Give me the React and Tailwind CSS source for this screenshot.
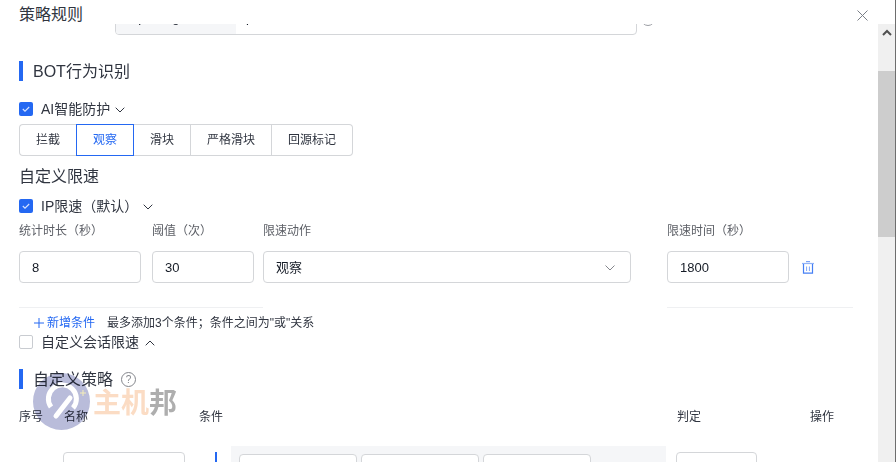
import React from "react";

const font = { fontFamily: '"Liberation Sans","Noto Sans CJK SC",sans-serif' };

function Check({ on }) {
  return on ? (
    <span className="w-[14px] h-[14px] rounded-[2px] bg-[#2468f2] flex items-center justify-center shrink-0">
      <svg width="10" height="10" viewBox="0 0 10 10" fill="none"><path d="M1.8 5l2.2 2.2 4.2-4.2" stroke="#d8e4ff" strokeWidth="1.1" /></svg>
    </span>
  ) : (
    <span className="w-[14px] h-[14px] rounded-[2px] border border-[#c9ccd1] bg-white shrink-0" />
  );
}

function Chevron({ up, className = "" }) {
  return (
    <svg width="10" height="6" viewBox="0 0 10 6" fill="none" className={className}>
      <path d={up ? "M.7 5.3L5 1l4.3 4.3" : "M.7.7L5 5 9.3.7"} stroke="#303540" strokeWidth="1" />
    </svg>
  );
}

function Heading({ children }) {
  return (
    <div className="flex items-center h-[20px]">
      <span className="w-[4px] h-[20px] bg-[#2468f2] shrink-0" />
      <span className="ml-[10px] pt-[2px] text-[16px] leading-[20px] text-[#303540]">{children}</span>
    </div>
  );
}

function Input({ w, children }) {
  return (
    <div className={`${w} h-[32px] border border-[#d4d6d9] rounded-[4px] px-[12px] pt-[1px] flex items-center text-[13px] text-[#151b26] bg-white shrink-0`}>
      {children}
    </div>
  );
}

export default function App() {
  return (
    <div className="w-[896px] h-[462px] bg-white overflow-hidden flex relative" style={font}>
      <div className="w-[878px] h-[462px] flex flex-col overflow-hidden">
        <div className="h-[24px] shrink-0 bg-white relative z-10 flex items-start justify-between pl-[19px] pr-[10px]">
          <span className="text-[16px] leading-[24px] mt-[3px] text-[#303540]">策略规则</span>
          <svg width="11" height="11" viewBox="0 0 11 11" fill="none" className="mt-[10px]">
            <path d="M.5.5l10 10M10.5.5l-10 10" stroke="#7a7f87" strokeWidth="1" />
          </svg>
        </div>

        <div className="flex-1 overflow-hidden pl-[19px]">
          <div className="-mt-[21px] h-[32px] ml-[96px] flex items-center">
            <div className="w-[522px] h-[32px] border border-[#d4d6d9] rounded-[4px] flex overflow-hidden text-[13px] text-[#151b26]">
              <div className="w-[120px] bg-[#f5f6f8] pl-[15px] leading-[28px]">apiRange</div>
              <div className="pl-[10px] leading-[28px]">p</div>
            </div>
            <span className="ml-[4px] w-[14px] h-[14px] rounded-full border border-[#9a9da3] shrink-0" />
          </div>

          <div className="mt-[26px]"><Heading>BOT行为识别</Heading></div>

          <div className="mt-[19px] flex items-center h-[18px]">
            <Check on />
            <span className="ml-[8px] text-[14px] leading-[18px] text-[#303540]">AI智能防护</span>
            <Chevron className="ml-[5px] mt-[2px]" />
          </div>

          <div className="mt-[6px] flex h-[32px] text-[12px] text-[#303540]">
            <div className="w-[57px] border border-r-0 border-[#d4d6d9] rounded-l-[4px] flex items-center justify-center">拦截</div>
            <div className="w-[58px] border border-[#2468f2] text-[#2468f2] flex items-center justify-center">观察</div>
            <div className="w-[57px] border border-l-0 border-[#d4d6d9] flex items-center justify-center">滑块</div>
            <div className="w-[81px] border border-l-0 border-[#d4d6d9] flex items-center justify-center">严格滑块</div>
            <div className="w-[81px] border border-l-0 border-[#d4d6d9] rounded-r-[4px] flex items-center justify-center">回源标记</div>
          </div>

          <div className="mt-[10px] text-[16px] leading-[22px] text-[#303540]">自定义限速</div>

          <div className="mt-[9px] flex items-center h-[18px]">
            <Check on />
            <span className="ml-[8px] text-[14px] leading-[18px] text-[#303540]">IP限速（默认）</span>
            <Chevron className="ml-[5px] mt-[2px]" />
          </div>

          <div className="mt-[7px] flex text-[12px] leading-[18px] text-[#5c5f66]">
            <span className="w-[133px]">统计时长（秒）</span>
            <span className="w-[111px]">阈值（次）</span>
            <span className="w-[404px]">限速动作</span>
            <span>限速时间（秒）</span>
          </div>

          <div className="mt-[11px] flex items-center">
            <Input w="w-[122px]">8</Input>
            <div className="w-[11px]" />
            <Input w="w-[102px]">30</Input>
            <div className="w-[9px]" />
            <div className="w-[368px] h-[32px] border border-[#d4d6d9] rounded-[4px] px-[12px] pt-[1px] flex items-center justify-between text-[13px] text-[#151b26] shrink-0">
              <span>观察</span>
              <svg width="10" height="6" viewBox="0 0 10 6" fill="none" className="mr-[3px]"><path d="M.5.5L5 5 9.5.5" stroke="#84868c" strokeWidth="1" /></svg>
            </div>
            <div className="w-[36px]" />
            <Input w="w-[122px]">1800</Input>
            <svg width="12" height="13" viewBox="0 0 12 13" fill="none" className="ml-[13px]">
              <path d="M4 .5h4" stroke="#2468f2" strokeWidth="1.4" opacity=".6" />
              <path d="M0 2.5h12" stroke="#2468f2" strokeWidth="1.2" opacity=".5" />
              <path d="M1.5 3v9.2h9V3" stroke="#2468f2" strokeWidth="1.2" opacity=".85" />
              <path d="M4.6 5.5v4.5M7.4 5.5v4.5" stroke="#2468f2" strokeWidth="1" opacity=".6" />
            </svg>
          </div>

          <div className="mt-[24px] flex h-[1px]">
            <span className="w-[244px] bg-[#eff0f2]" />
            <span className="w-[404px]" />
            <span className="w-[186px] bg-[#eff0f2]" />
          </div>

          <div className="mt-[6px] flex items-center h-[18px] text-[12px] leading-[18px]">
            <svg width="10" height="10" viewBox="0 0 10 10" fill="none" className="ml-[15px]"><path d="M5 0v10M0 5h10" stroke="#2468f2" strokeWidth="1" /></svg>
            <span className="ml-[3px] text-[#2468f2]">新增条件</span>
            <span className="ml-[12px] text-[#303540]">最多添加3个条件；条件之间为"或"关系</span>
          </div>

          <div className="mt-[1px] flex items-center h-[18px]">
            <Check />
            <span className="ml-[8px] text-[14px] leading-[18px] text-[#303540]">自定义会话限速</span>
            <Chevron up className="ml-[6px] mt-[1px]" />
          </div>

          <div className="mt-[18px] flex items-center">
            <Heading>自定义策略</Heading>
            <span className="ml-[8px] w-[15px] h-[15px] rounded-full border border-[#84868c] text-[10px] leading-[13px] text-center text-[#84868c]">?</span>
          </div>

          <div className="mt-[19px] flex text-[12px] leading-[18px] text-[#303540]">
            <span className="w-[45px]">序号</span>
            <span className="w-[135px]">名称</span>
            <span className="w-[478px]">条件</span>
            <span className="w-[133px]">判定</span>
            <span>操作</span>
          </div>

          <div className="mt-[20px] flex items-start">
            <div className="w-[44px]" />
            <div className="w-[122px] h-[32px] mt-[6px] border border-[#d4d6d9] rounded-[4px] shrink-0" />
            <div className="w-[30px]" />
            <span className="w-[2px] h-[20px] mt-[6px] bg-[#2468f2] shrink-0" />
            <div className="w-[14px]" />
            <div className="w-[435px] h-[40px] bg-[#f5f6f8] flex gap-[4px] pt-[8px] pl-[8px] shrink-0">
              <div className="w-[118px] h-[32px] bg-white border border-[#d4d6d9] rounded-[4px]" />
              <div className="w-[118px] h-[32px] bg-white border border-[#d4d6d9] rounded-[4px]" />
              <div className="w-[108px] h-[32px] bg-white border border-[#d4d6d9] rounded-[4px]" />
            </div>
            <div className="w-[10px]" />
            <div className="w-[81px] h-[32px] mt-[6px] border border-[#d4d6d9] rounded-[4px] shrink-0" />
          </div>
        </div>
      </div>

      <div className="w-[17px] h-[462px] flex flex-col shrink-0">
        <div className="h-[24px] bg-white" />
        <div className="h-[47px] bg-[#f0f0f0] flex items-start justify-center pt-[5px]">
          <svg width="10" height="7" viewBox="0 0 10 7" fill="none"><path d="M1 6l4-4 4 4" stroke="#505050" strokeWidth="2" /></svg>
        </div>
        <div className="h-[166px] bg-[#cdcdcd]" />
        <div className="flex-1 bg-[#f0f0f0]" />
      </div>
      <div className="w-[1px] h-[462px] bg-[#6e6e6e] shrink-0" />

      <div className="absolute left-[33px] top-[373px] w-[57px] h-[57px] rounded-full bg-[#b9bcda] mix-blend-multiply overflow-hidden">
        <svg width="57" height="57" viewBox="0 0 57 57" fill="none">
          <path d="M18 34A14 14 0 1 1 40 35" stroke="#fff" strokeWidth="5" />
          <path d="M37 25L23 43" stroke="#fff" strokeWidth="5" strokeLinecap="round" />
          <path d="M50 17v6M47 20h6" stroke="#f6eeb8" strokeWidth="1" />
        </svg>
      </div>
      <div className="absolute left-[93px] top-[383px] flex text-[28px] leading-[36px] font-bold mix-blend-multiply" style={{ fontFamily: '"Noto Sans CJK SC",serif' }}>
        <span className="text-[#fbdcc4]">主机</span>
        <span className="text-[#aeaeae]">邦</span>
      </div>
    </div>
  );
}
